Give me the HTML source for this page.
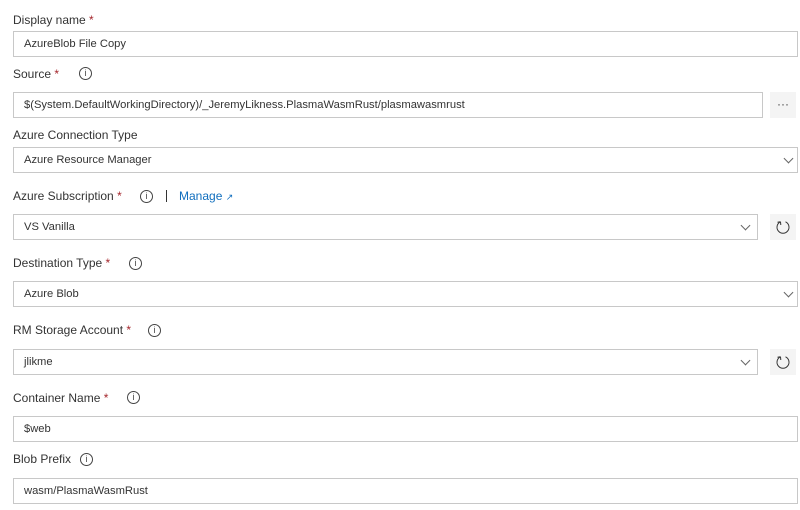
<!DOCTYPE html>
<html><head><style>
body{margin:0;width:800px;height:510px;background:#fff;font-family:"Liberation Sans",sans-serif;font-size:12px;color:#333;position:relative;overflow:hidden}
.l{position:absolute;left:13px;line-height:14px;color:#333}
.l .r{color:#a4262c}
.i{position:absolute;width:11px;height:11px;border:1px solid #444;border-radius:50%;font-size:9px;line-height:11px;text-align:center;color:#444}
.f{position:absolute;left:13px;height:24px;border:1px solid #c8c8c8;box-sizing:content-box;line-height:24px;padding-left:10px;color:#333;font-size:11.2px}
.b{position:absolute;left:770px;width:26px;height:26px;background:#f4f4f4;text-align:center;line-height:24px;color:#444}
.c{position:absolute;width:6px;height:6px;border-right:1px solid #666;border-bottom:1px solid #666;transform:rotate(45deg)}
</style></head><body>
<div class="l" style="top:13px">Display name <span class="r">*</span></div>
<div class="f" style="top:31px;width:773px">AzureBlob File Copy</div>

<div class="l" style="top:67px">Source <span class="r">*</span></div>
<div class="i" style="left:79px;top:67px">i</div>
<div class="f" style="top:92px;width:738px">$(System.DefaultWorkingDirectory)/_JeremyLikness.PlasmaWasmRust/plasmawasmrust</div>
<div class="b" style="top:92px">···</div>

<div class="l" style="top:128px">Azure Connection Type</div>
<div class="f" style="top:147px;width:773px">Azure Resource Manager</div>
<div class="c" style="left:785px;top:155px"></div>

<div class="l" style="top:189px">Azure Subscription <span class="r">*</span></div>
<div class="i" style="left:140px;top:190px">i</div>
<div style="position:absolute;left:166px;top:190px;width:1px;height:12px;background:#333"></div>
<div style="position:absolute;left:179px;top:189px;color:#106ebe;line-height:14px">Manage <span style="font-size:9px">↗</span></div>
<div class="f" style="top:214px;width:733px">VS Vanilla</div>
<div class="c" style="left:742px;top:222px"></div>
<div class="b" style="top:214px"><svg width="26" height="26" viewBox="0 0 26 26"><path d="M10.5 7.8A6 6 0 1 0 15.5 7.8" fill="none" stroke="#333" stroke-width="1"/><path d="M10.5 7.8L10.8 11M10.5 7.8L7.5 8.3" fill="none" stroke="#333" stroke-width="1"/></svg></div>

<div class="l" style="top:256px">Destination Type <span class="r">*</span></div>
<div class="i" style="left:129px;top:257px">i</div>
<div class="f" style="top:281px;width:773px">Azure Blob</div>
<div class="c" style="left:785px;top:289px"></div>

<div class="l" style="top:323px">RM Storage Account <span class="r">*</span></div>
<div class="i" style="left:148px;top:324px">i</div>
<div class="f" style="top:349px;width:733px">jlikme</div>
<div class="c" style="left:742px;top:357px"></div>
<div class="b" style="top:349px"><svg width="26" height="26" viewBox="0 0 26 26"><path d="M10.5 7.8A6 6 0 1 0 15.5 7.8" fill="none" stroke="#333" stroke-width="1"/><path d="M10.5 7.8L10.8 11M10.5 7.8L7.5 8.3" fill="none" stroke="#333" stroke-width="1"/></svg></div>

<div class="l" style="top:391px">Container Name <span class="r">*</span></div>
<div class="i" style="left:127px;top:391px">i</div>
<div class="f" style="top:416px;width:773px">$web</div>

<div class="l" style="top:452px">Blob Prefix</div>
<div class="i" style="left:80px;top:453px">i</div>
<div class="f" style="top:478px;width:773px">wasm/PlasmaWasmRust</div>
</body></html>
